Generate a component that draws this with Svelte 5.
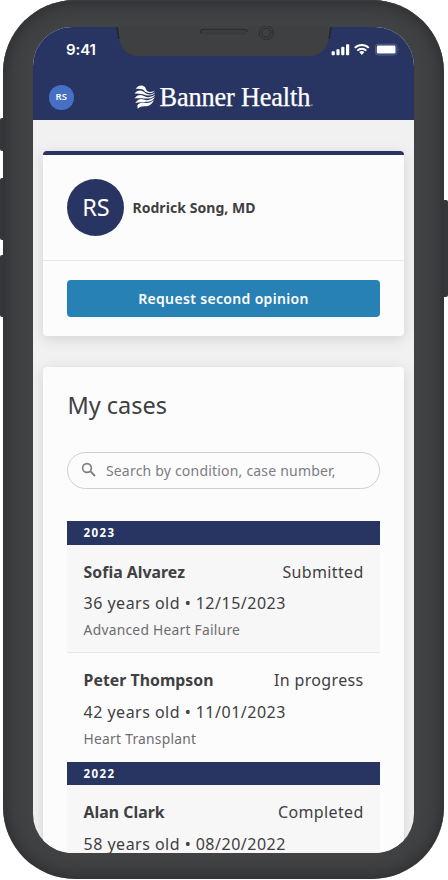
<script>
  const years = [
    {
      year: '2023',
      cases: [
        { name: 'Sofia Alvarez', status: 'Submitted', age: 36, date: '12/15/2023', condition: 'Advanced Heart Failure' },
        { name: 'Peter Thompson', status: 'In progress', age: 42, date: '11/01/2023', condition: 'Heart Transplant' }
      ]
    },
    {
      year: '2022',
      cases: [
        { name: 'Alan Clark', status: 'Completed', age: 58, date: '08/20/2022' }
      ]
    }
  ];
</script>

<div class="stage">
  <i class="key mute"></i>
  <i class="key up"></i>
  <i class="key down"></i>
  <i class="key power"></i>

  <div class="phone">
    <div class="screen">
      <header>
        <div class="status">
          <span class="time">9:41</span>
          <svg width="70" height="14" viewBox="0 0 70 14">
            <g fill="#fff">
              <rect x="0.6" y="8.2" width="3.2" height="4" rx="0.9" />
              <rect x="5.4" y="6.2" width="3.2" height="6" rx="0.9" />
              <rect x="10.2" y="3.8" width="3.2" height="8.4" rx="0.9" />
              <rect x="15" y="1.2" width="3.2" height="11" rx="0.9" />
              <path d="M28.2 9.100a3.900 3.900 0 0 1 5.200 0L30.800 11.900z" />
            </g>
            <g fill="none" stroke="#fff" stroke-width="2">
              <path d="M23.800 4.900a10 10 0 0 1 14 0" />
              <path d="M26.300 7.600a6.400 6.400 0 0 1 9 0" />
            </g>
            <rect x="44.4" y="1.200" width="21.5" height="10.8" rx="2.8" fill="none" stroke="#53628f" stroke-width="1" />
            <rect x="45.800" y="2.600" width="18.700" height="8" rx="1.4" fill="#fff" />
            <path d="M67.2 4.8q1.500 1.800 0 3.600z" fill="#53628f" />
          </svg>
        </div>
        <div class="nav">
          <span class="me">RS</span>
          <div class="brand">
            <svg width="22" height="24" viewBox="0 0 22 24" fill="#fff">
              <path d="M1.600 3.900C4 .200 8-.300 10.300 1.500C12.500 3.500 11.700 6 14.500 6.700C17 7.300 19.500 6.600 20.900 5.200C19.500 7.900 16.500 8.500 13.500 7.700C10 6.800 10.400 4.700 8 4.200C5.800 3.700 3.600 3.400 1.600 3.900Z" />
              <path d="M.5 8.700C2.800 5.200 6.500 4.700 9.200 6.600C11.500 8.300 12.500 9.600 15.500 9.400C18 9.300 20 8.500 21.300 7.300C20.200 9.600 17 10.700 14 10.500C10.700 10.300 10 9.500 7 9.100C4.600 8.700 2.600 8.400.5 8.700Z" />
              <path d="M.5 13.400C3.200 9.500 6.600 9.200 9.400 10.800C11.600 12 13 12.500 15.500 12C18 11.500 20 10.700 21.300 9.500C20.200 12 17.300 13.400 14.300 13.500C10.900 13.600 9.800 13.500 7 13.300C4.500 13.100 2.600 13 .5 13.400Z" />
              <path d="M1.300 18C3.800 13.900 7 13.400 9.900 14.500C12.300 15.400 13.800 15.300 16 14.500C18.200 13.700 19.800 12.900 21 11.800C19.800 14.900 17 16.700 14 16.800C10.700 16.900 9.800 17.200 7 17.200C4.800 17.200 3 17.500 1.300 18Z" />
              <path d="M3.700 23.800L3.300 20.200C5.600 17.600 8.400 16.900 10.900 17.700C13.600 18.500 16.900 17.800 19.900 15C18.200 19 15.500 21 12.500 21.200C9.200 21.300 6.300 21 3.700 23.800Z" />
            </svg>
            <span class="wordmark">Banner Health<small>.</small></span>
          </div>
        </div>
      </header>

      <main>
        <section class="card profile">
          <div class="doctor">
            <span class="avatar">RS</span>
            <span class="docname">Rodrick Song, MD</span>
          </div>
          <div class="action"><button>Request second opinion</button></div>
        </section>

        <section class="card cases">
          <h1>My cases</h1>
          <div class="search">
            <svg width="16" height="16" viewBox="0 0 16 16" fill="none" stroke="#7b7d82" stroke-width="1.6">
              <circle cx="6" cy="6" r="4.400" />
              <path d="M9.200 9.200L14 14" stroke-width="1.900" />
            </svg>
            <span>Search by condition, case number,</span>
          </div>
          <div class="list">
            {#each years as group}
              <div class="year">{group.year}</div>
              {#each group.cases as item, i}
                <article class:shaded={i === 0}>
                  <div class="top"><b>{item.name}</b><span>{item.status}</span></div>
                  <div class="meta">{item.age} years old • {item.date}</div>
                  {#if item.condition}
                    <div class="condition">{item.condition}</div>
                  {/if}
                </article>
              {/each}
            {/each}
          </div>
        </section>
      </main>
    </div>

    <svg class="notch" width="216" height="31" viewBox="0 0 216 31">
      <path d="M0 0V1C2 1 1.500 5 2.300 10C4.500 23 11 30 24 30H192C205 30 211.500 23 213.700 10C214.500 5 214 1 216 1V0Z" fill="#3f4042" />
      <path d="M.5 1C2 2 1.400 7 3 13M215.500 1C214 2 214.600 7 213 13" stroke="#242529" stroke-width="1.500" fill="none" />
      <rect x="84" y="3" width="47.500" height="6.800" rx="3.400" fill="#3b3c3e" stroke="#4a4b4d" stroke-width=".6" />
      <path d="M84.300 7.500Q83.800 3.200 88 3.200H127.500Q131.300 3.200 131.300 6" fill="none" stroke="#292a2c" stroke-width="1.100" />
      <circle cx="150.300" cy="6.700" r="7" fill="#3d3e40" stroke="#2d2e30" stroke-width="1" />
      <circle cx="150.300" cy="6.700" r="4.300" fill="#3f4042" stroke="#2b2c2e" stroke-width="1" />
    </svg>
  </div>
</div>

<style>
  :global(body) { margin: 0; background: #fff; overflow: hidden; }
  .stage {
    position: relative;
    width: 448px;
    height: 880px;
    box-sizing: border-box;
    padding-left: 3px;
    overflow: hidden;
    font-family: 'Noto Sans', 'Liberation Sans', sans-serif;
    color: #3f4042;
  }
  .key { position: absolute; background: #35363a; width: 6px; left: 0; border-radius: 2px; }
  .mute { top: 118px; height: 33px; }
  .up { top: 178px; height: 62px; }
  .down { top: 255px; height: 62px; }
  .power { left: 442px; top: 200px; height: 97px; }
  .phone {
    position: relative;
    width: 441px;
    height: 879px;
    box-sizing: border-box;
    padding: 27px 30px 26px 30px;
    border-radius: 72px;
    background: #414244;
    box-shadow: inset 0 0 18px 1px #26282b, inset 0 1px 1px #54575a;
  }
  .screen {
    height: 826px;
    border-radius: 39px;
    overflow: hidden;
    background: #f1f1f1;
  }
  header { height: 93px; background: #283562; color: #fff; }
  .status {
    height: 44px;
    box-sizing: border-box;
    padding: 1px 13.500px 0 33px;
    display: flex;
    justify-content: space-between;
    align-items: center;
  }
  .status svg { margin-top: 1.500px; }
  .time { font: 600 15px/20px Inter, sans-serif; letter-spacing: -.1px; margin-top: 1px; }
  .nav { display: flex; align-items: center; height: 54px; padding-left: 16px; }
  .me {
    width: 24.500px;
    height: 24.500px;
    margin-top: -1px;
    border-radius: 50%;
    background: #4670c3;
    font-size: 9.500px;
    line-height: 24.500px;
    font-weight: 600;
    letter-spacing: .2px;
    text-align: center;
  }
  .brand { display: flex; align-items: center; margin-left: 60.500px; }
  .brand svg { margin-top: -2px; }
  .wordmark { font: 26.300px/30px 'Liberation Serif', serif; margin: 3.500px 0 0 3.500px; white-space: nowrap; letter-spacing: -.15px; -webkit-text-stroke: .25px #fff; }
  small { font-size: 12px; opacity: .5; }
  main { padding: 30.500px 10px 0; display: flex; flex-direction: column; gap: 31px; }
  .card { background: #fcfcfc; border-radius: 4px; box-shadow: 0 3px 14px rgba(0, 0, 0, .13); }
  .profile { height: 185.500px; box-sizing: border-box; border-top: 4px solid #283562; }
  .doctor {
    height: 105px;
    display: flex;
    align-items: center;
    padding-left: 24.400px;
    gap: 8px;
    border-bottom: 1.500px solid #e8e8e8;
  }
  .avatar {
    width: 57px;
    height: 57px;
    border-radius: 50%;
    background: #283562;
    color: #fff;
    font-size: 23.500px;
    line-height: 57px;
    text-align: center;
  }
  .docname { font-size: 14px; font-weight: 700; letter-spacing: .06px; }
  .action { padding: 19px 24.400px; display: flex; }
  button {
    flex: 1;
    height: 37px;
    border: 0;
    border-radius: 4px;
    padding: 0;
    background: #2881b5;
    color: #fff;
    font: 600 14px/37px 'Noto Sans', sans-serif;
    letter-spacing: .34px;
  }
  .cases { height: 600px; padding: 0 24.400px; }
  h1 { margin: 0; padding-top: 22px; font-size: 23.500px; line-height: 32px; font-weight: 400; }
  .search {
    margin-top: 30.500px;
    height: 37px;
    box-sizing: border-box;
    border: 1px solid #cfcfcf;
    border-radius: 19px;
    display: flex;
    align-items: center;
    padding-left: 12.500px;
    gap: 9px;
    color: #7b7d82;
    font-size: 14px;
    letter-spacing: .2px;
    white-space: nowrap;
  }
  .list { margin-top: 32.500px; }
  .year {
    height: 23.500px;
    background: #283562;
    color: #fff;
    font-size: 11.500px;
    line-height: 24px;
    font-weight: 700;
    letter-spacing: 1.400px;
    padding-left: 16.200px;
  }
  article { height: 108.500px; box-sizing: border-box; padding: 16px 16px 0 16.200px; }
  .shaded { background: #f7f7f7; border-bottom: 1.500px solid #e8e8e8; }
  .top { display: flex; justify-content: space-between; font-size: 16px; line-height: 22px; letter-spacing: .35px; }
  b { font-size: 15.800px; letter-spacing: .04px; }
  .meta { margin-top: 9.500px; font-size: 16px; line-height: 22px; letter-spacing: .5px; word-spacing: -.1px; }
  .condition { margin-top: 6px; font-size: 13.800px; line-height: 20px; letter-spacing: .26px; color: #6c6d71; }
  .notch { position: absolute; left: 113px; top: 26px; }
</style>
